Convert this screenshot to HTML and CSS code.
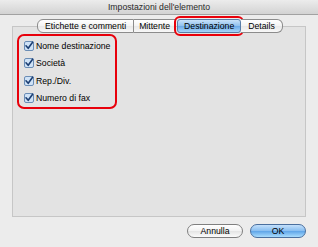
FILE: index.html
```html
<!DOCTYPE html>
<html>
<head>
<meta charset="utf-8">
<link rel="stylesheet" href="styles.css">
</head>
<body>
<div class="window">
  <div class="titlebar">Impostazioni dell'elemento</div>
  <div class="content">
    <div class="tabs">
      <div class="tab first">Etichette e commenti</div>
      <div class="tab">Mittente</div>
      <div class="tab selected">Destinazione</div>
      <div class="tab last">Details</div>
    </div>
    <div class="panel">
      <div class="highlight">
        <label class="item"><span class="cb"><svg width="10" height="10" viewBox="0 0 10 10"><rect x="0.5" y="0.5" width="9" height="9" rx="1.5" fill="#cfe2f6" stroke="#6a8db5"/><path d="M2 4.8 L4.2 7.3 L8.6 1.2" fill="none" stroke="#1c3f73" stroke-width="1.6" stroke-linecap="round" stroke-linejoin="round"/></svg></span>Nome destinazione</label>
        <label class="item"><span class="cb"><svg width="10" height="10" viewBox="0 0 10 10"><rect x="0.5" y="0.5" width="9" height="9" rx="1.5" fill="#cfe2f6" stroke="#6a8db5"/><path d="M2 4.8 L4.2 7.3 L8.6 1.2" fill="none" stroke="#1c3f73" stroke-width="1.6" stroke-linecap="round" stroke-linejoin="round"/></svg></span>Società</label>
        <label class="item"><span class="cb"><svg width="10" height="10" viewBox="0 0 10 10"><rect x="0.5" y="0.5" width="9" height="9" rx="1.5" fill="#cfe2f6" stroke="#6a8db5"/><path d="M2 4.8 L4.2 7.3 L8.6 1.2" fill="none" stroke="#1c3f73" stroke-width="1.6" stroke-linecap="round" stroke-linejoin="round"/></svg></span>Rep./Div.</label>
        <label class="item"><span class="cb"><svg width="10" height="10" viewBox="0 0 10 10"><rect x="0.5" y="0.5" width="9" height="9" rx="1.5" fill="#cfe2f6" stroke="#6a8db5"/><path d="M2 4.8 L4.2 7.3 L8.6 1.2" fill="none" stroke="#1c3f73" stroke-width="1.6" stroke-linecap="round" stroke-linejoin="round"/></svg></span>Numero di fax</label>
      </div>
    </div>
    <div class="buttons">
      <div class="btn">Annulla</div>
      <div class="btn default">OK</div>
    </div>
  </div>
</div>
</body>
</html>
```
FILE: styles.css
```css
html, body {
  margin: 0;
  padding: 0;
  background: #ececec;
}
.window {
  width: 318px;
  height: 247px;
  font-family: "Liberation Sans", Arial, sans-serif;
  font-size: 8.7px;
  color: #000;
  background: #ececec;
  overflow: hidden;
  white-space: nowrap;
}
.titlebar {
  height: 14px;
  line-height: 14px;
  text-align: center;
  color: #2a2a2a;
  background: linear-gradient(#ececec, #d3d3d3);
  border-bottom: 1px solid #a2a2a2;
}
.content {
  padding: 4px 12px 0 12px;
}
.tabs {
  display: flex;
  margin-left: 25px;
  height: 14px;
  margin-bottom: -7px;
  position: relative;
  z-index: 1;
}
.tab {
  height: 12px;
  line-height: 12px;
  padding: 0 5px;
  text-align: center;
  border: 1px solid #8c8c8c;
  border-left: none;
  background: linear-gradient(#ffffff, #f3f3f3 50%, #e8e8e8 51%, #f8f8f8);
}
.tab.first {
  border-left: 1px solid #8c8c8c;
  border-radius: 6px 0 0 6px;
  padding: 0 7px;
}
.tab.last {
  border-radius: 0 6px 6px 0;
  padding: 0 7px;
}
.tab.selected {
  background: linear-gradient(#c9e2f9, #8fc0ee 50%, #6aa8e6 51%, #a8d6fb);
  border-color: #5a7ea8;
  border-left: 1px solid #5a7ea8;
  outline: 2px solid #e8000b;
  outline-offset: 1px;
  border-radius: 3px;
  margin: 0 0 0 1px;
  padding: 0 6px;
}
.panel {
  height: 182px;
  background: #e3e3e3;
  border: 1px solid #c6c6c6;
  padding: 7px 0 0 4px;
}
.highlight {
  width: 91px;
  border: 2px solid #e8000b;
  border-radius: 7px;
  padding: 1px 0 0 5px;
  display: flex;
  flex-direction: column;
}
.item {
  display: flex;
  align-items: center;
  height: 17.5px;
  gap: 2px;
}
.cb {
  width: 10px;
  height: 10px;
  display: flex;
}
.buttons {
  display: flex;
  justify-content: flex-end;
  gap: 7px;
  margin-top: 7px;
}
.btn {
  width: 54px;
  height: 12px;
  line-height: 12px;
  text-align: center;
  border: 1px solid #7f7f7f;
  border-radius: 7px;
  background: linear-gradient(#ffffff, #f2f2f2 50%, #e4e4e4 51%, #fbfbfb);
}
.btn.default {
  border-color: #4a6f9e;
  background: linear-gradient(#c4e0fb, #86bdf0 50%, #5ea4e8 51%, #a9dcfd);
}
```
